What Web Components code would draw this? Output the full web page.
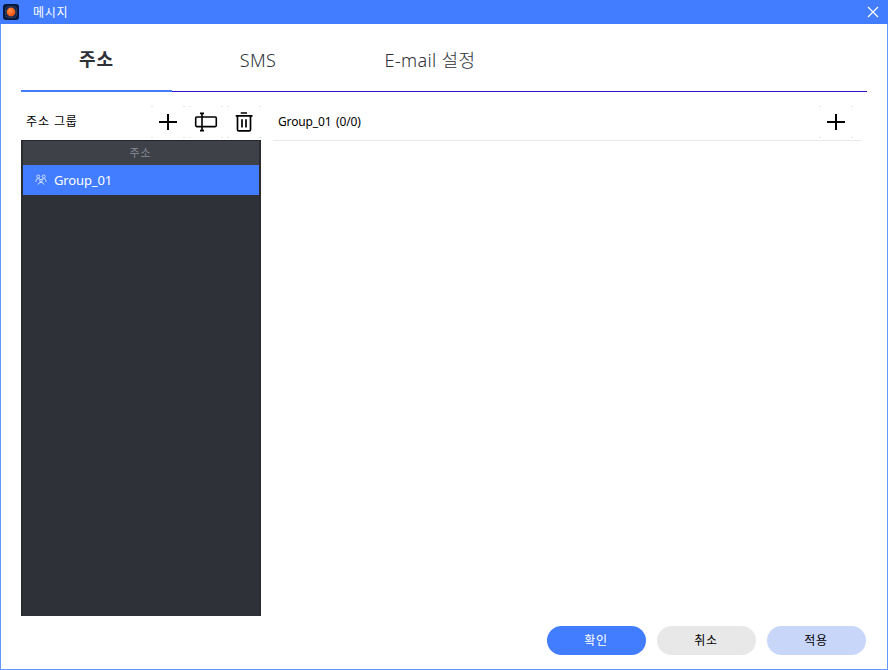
<!DOCTYPE html>
<html lang="ko"><head><meta charset="utf-8"><title>메시지</title>
<style>html,body{margin:0;height:100%;overflow:hidden}body{font-family:"Noto Sans","Noto Sans CJK KR",sans-serif;font-size:12px;color:#000}</style></head><body>
<message-window></message-window>
<script>
const define=(name,html)=>customElements.define(name,class extends HTMLElement{
  connectedCallback(){if(this.shadowRoot)return;const t=document.createElement('template');t.innerHTML=html;this.attachShadow({mode:'open'}).append(t.content.cloneNode(true));}
});
define('title-bar',`<style>:host{display:flex;align-items:center;height:24px;background:#427dff;color:#fff;padding:0 9px 0 3px;box-sizing:border-box}span{margin-left:14px;flex:1;line-height:24px;padding-top:2px;letter-spacing:.7px}svg{display:block}</style>
<svg width="16" height="16" viewBox="0 0 16 16"><defs><radialGradient id="g" cx=".4" cy=".35"><stop offset="0" stop-color="#ff9650"/><stop offset="1" stop-color="#f45a16"/></radialGradient></defs><rect width="16" height="16" rx="3" fill="#08173c"/><rect x="2.5" y="2.5" width="11" height="11" rx="2" fill="#152a50" stroke="#38486b" stroke-dasharray="2 1"/><circle cx="8" cy="8" r="4.4" fill="url(#g)"/></svg>
<span><slot></slot></span>
<svg width="12" height="12" viewBox="0 0 12 12"><path d="M1 1 11 11M11 1 1 11" stroke="#fff" stroke-width="1.3"/></svg>`);
define('tab-item',`<style>:host{display:block;box-sizing:border-box;height:68px;text-align:center;font-size:18px;line-height:26px;padding-top:23px;color:#2e3038;white-space:nowrap;font-weight:300;letter-spacing:.35px}:host([active]){font-weight:700;border-bottom:2px solid #427dff;padding-top:22px;letter-spacing:1px}</style><slot></slot>`);
define('tab-strip',`<style>:host{display:grid;grid-template-columns:151px 172px 172px 1fr;height:68px;background:linear-gradient(#2b10d0,#2b10d0) bottom/100% 1px no-repeat}</style><slot></slot>`);
define('icon-button',`<style>:host{display:grid;place-items:center;width:34px;height:32px;--c:#e6e6e6;background:linear-gradient(var(--c),var(--c)) 0 0/2px 1px,linear-gradient(var(--c),var(--c)) 100% 0/2px 1px,linear-gradient(var(--c),var(--c)) 0 100%/2px 1px,linear-gradient(var(--c),var(--c)) 100% 100%/2px 1px;background-repeat:no-repeat}::slotted(svg){display:block}</style><slot></slot>`);
define('group-row',`<style>:host{display:flex;align-items:center;height:30px;background:#427dff;color:#fff;font-size:13px;padding-left:12px;box-sizing:border-box}svg{margin-right:7px}span{letter-spacing:-.12px}</style>
<svg width="12" height="12" viewBox="0 0 12 12" fill="none" stroke="#dce7ff" stroke-width=".85"><circle cx="3.3" cy="2.5" r="1.5"/><circle cx="8.7" cy="2.5" r="1.5"/><path d="M1 8V6.6Q1.2 4.6 3.3 4.6T5.3 6.2M6.7 6.2Q6.7 4.6 8.7 4.6T11 6.6V8"/><circle cx="6" cy="6.6" r="1.3"/><path d="M3.1 10.6Q3.4 8.4 6 8.4T8.9 10.6"/></svg><span><slot></slot></span>`);
define('group-list',`<style>:host{display:block;box-sizing:border-box;height:476px;background:#2f3138;border:solid #2a2c32;border-width:1px 2px 0;border-top-color:#24262c}header{height:24px;background:#3f4148;color:#868c9b;text-align:center;font-size:11px;line-height:24px;letter-spacing:.9px;padding-right:1px}</style><header><slot name="head"></slot></header><slot></slot>`);
define('pill-button',`<style>:host{display:block;width:99px;height:29px;border-radius:15px;text-align:center;line-height:29px;background:#e8e8e8;color:#000;letter-spacing:.7px}:host([kind=primary]){background:#427dff;color:#fff}:host([kind=soft]){background:#c8d6fa}</style><slot></slot>`);
define('message-window',`<style>
:host{display:flex;flex-direction:column;width:888px;height:670px;box-sizing:border-box;background:linear-gradient(#fff,#fff) 1px 0/886px 669px no-repeat #6496f5}
tab-strip{margin:0 21px}
main{display:grid;grid-template-columns:240px 588px;column-gap:12px;margin:14px 0 0 21px}
.bar{display:flex;height:34px;align-items:flex-start;box-sizing:border-box}
.bar span{flex:1;line-height:32px;padding-left:5px;white-space:pre}
.right{height:35px;border-bottom:1px solid #e8e8e8;padding-right:8px}
.right span{letter-spacing:-.13px;word-spacing:1.5px}
.left{gap:4px}
.left span{letter-spacing:.9px}
footer{display:flex;gap:11px;justify-content:flex-end;padding:9.5px 22.5px 0 0}
</style>
<title-bar>메시지</title-bar>
<tab-strip><tab-item active>주소</tab-item><tab-item>SMS</tab-item><tab-item>E-mail 설정</tab-item></tab-strip>
<main><section><div class="bar left"><span>주소 그룹</span>
<icon-button><svg width="18" height="18" viewBox="0 0 18 18"><path d="M0 9H18M9 1V17" stroke="#000" stroke-width="2"/></svg></icon-button>
<icon-button><svg width="24" height="20" viewBox="0 0 24 20" fill="none" stroke="#000" stroke-width="1.6"><rect x="1.7" y="5" width="20.6" height="9.6" rx="1"/><path d="M8 1.2V18.8M6 1.4H10M6 18.6H10"/></svg></icon-button>
<icon-button><svg width="18" height="20" viewBox="0 0 18 20" fill="none" stroke="#000" stroke-width="1.7"><path d="M.7 3.8H17.5M5.7 1H12M2.5 4V17.4Q2.5 18.8 3.9 18.8H14.1Q15.5 18.8 15.5 17.4V4M7 7.2V15.6M11 7.2V15.6"/></svg></icon-button></div>
<group-list><span slot="head">주소</span><group-row>Group_01</group-row></group-list></section>
<section><div class="bar right"><span>Group_01 (0/0)</span><icon-button><svg width="18" height="18" viewBox="0 0 18 18"><path d="M0 9H18M9 1V17" stroke="#000" stroke-width="2"/></svg></icon-button></div></section></main>
<footer><pill-button kind="primary">확인</pill-button><pill-button>취소</pill-button><pill-button kind="soft">적용</pill-button></footer>`);
</script></body></html>
